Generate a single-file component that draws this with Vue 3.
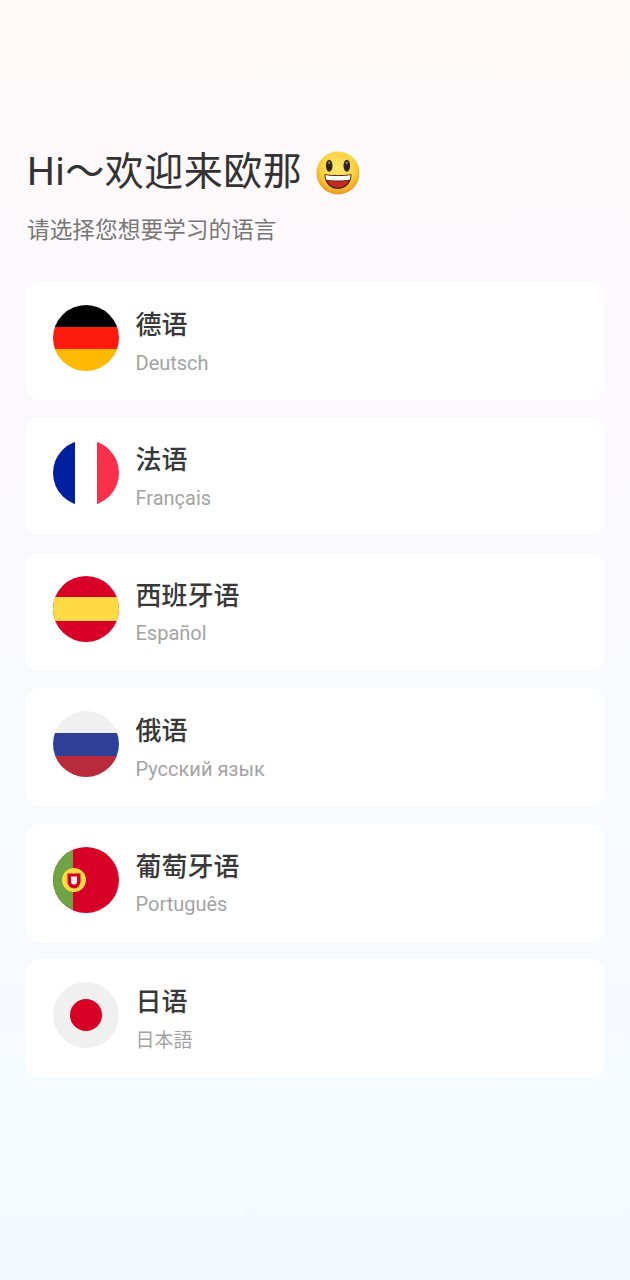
<script setup>
const langs = [
  { id: 'de', name: '德语', native: 'Deutsch' },
  { id: 'fr', name: '法语', native: 'Français' },
  { id: 'es', name: '西班牙语', native: 'Español' },
  { id: 'ru', name: '俄语', native: 'Русский язык' },
  { id: 'pt', name: '葡萄牙语', native: 'Português' },
  { id: 'ja', name: '日语', native: '日本語' },
]
</script>

<template>
  <div class="page">
    <div class="heading">
      <h1 class="title">
        <span>Hi～欢迎来欧那</span>
        <svg class="emoji" viewBox="0 0 44 44" width="44" height="44">
          <defs>
            <radialGradient id="face" cx="50%" cy="38%" r="62%">
              <stop offset="0" stop-color="#ffe870" />
              <stop offset="0.65" stop-color="#fcd03c" />
              <stop offset="1" stop-color="#ec961c" />
            </radialGradient>
          </defs>
          <circle cx="22" cy="22" r="21.5" fill="url(#face)" />
          <ellipse cx="13.2" cy="14.7" rx="3.3" ry="6" fill="#2e2320" />
          <ellipse cx="30.8" cy="14.7" rx="3.3" ry="6" fill="#2e2320" />
          <ellipse cx="13.2" cy="11.8" rx="1.2" ry="1.4" fill="#8a7a66" />
          <ellipse cx="30.8" cy="11.8" rx="1.2" ry="1.4" fill="#8a7a66" />
          <path d="M8.5 23C13 24.5 31 24.5 35.5 23C36 32 29 38 22 38C15 38 8 32 8.5 23Z" fill="#4a1f16" />
          <path d="M11 29.5C15 30.5 29 30.5 33 29.5C31 34 27 36.5 22 36.5C17 36.5 13 34 11 29.5Z" fill="#c5281f" />
          <path d="M9.5 24C14 25.3 30 25.3 34.5 24C34.5 26 34.2 27.4 33.6 28.8C29 29.8 15 29.8 10.4 28.8C9.8 27.4 9.5 26 9.5 24Z" fill="#fff" />
        </svg>
      </h1>
      <p class="subtitle">请选择您想要学习的语言</p>
    </div>

    <ul class="list">
      <li v-for="lang in langs" :key="lang.id" class="card">
        <svg class="flag" viewBox="0 0 66 66" width="66" height="66">
          <defs>
            <clipPath :id="`clip-${lang.id}`"><circle cx="33" cy="33" r="33" /></clipPath>
          </defs>
          <g :clip-path="`url(#clip-${lang.id})`">
            <template v-if="lang.id === 'de'">
              <rect width="66" height="22" fill="#000" />
              <rect y="22" width="66" height="22" fill="#ff1a0e" />
              <rect y="44" width="66" height="22" fill="#ffb900" />
            </template>
            <template v-else-if="lang.id === 'fr'">
              <rect width="22" height="66" fill="#00209f" />
              <rect x="22" width="22" height="66" fill="#fff" />
              <rect x="44" width="22" height="66" fill="#f8304c" />
            </template>
            <template v-else-if="lang.id === 'es'">
              <rect width="66" height="66" fill="#d80027" />
              <rect y="21" width="66" height="24" fill="#ffda44" />
            </template>
            <template v-else-if="lang.id === 'ru'">
              <rect width="66" height="22" fill="#f0f0f0" />
              <rect y="22" width="66" height="23" fill="#2f3e96" />
              <rect y="45" width="66" height="21" fill="#b92b3c" />
            </template>
            <template v-else-if="lang.id === 'pt'">
              <rect width="66" height="66" fill="#d80027" />
              <rect width="20" height="66" fill="#6da544" />
              <circle cx="21" cy="33" r="12" fill="#ffda44" />
              <path d="M14.5 26.5h13v8.5a6.5 6.5 0 0 1-13 0z" fill="#d80027" />
              <path d="M18 29.5h6v5a3 3 0 0 1-6 0z" fill="#f0f0f0" />
            </template>
            <template v-else>
              <rect width="66" height="66" fill="#f0f0f0" />
              <circle cx="33" cy="33" r="16" fill="#d80027" />
            </template>
          </g>
        </svg>
        <div class="text">
          <div class="name">{{ lang.name }}</div>
          <div class="native" :class="{ cjk: lang.id === 'ja' }">{{ lang.native }}</div>
        </div>
      </li>
    </ul>
  </div>
</template>

<style>
html, body { margin: 0; padding: 0; }
</style>

<style scoped>
.page {
  box-sizing: border-box;
  width: 630px;
  height: 1280px;
  padding: 148px 26px 0;
  background: linear-gradient(180deg, #fff9f9 0%, #fbf9fe 35%, #f9fafe 55%, #f4fbff 100%);
  font-family: Roboto, "Noto Sans CJK SC", sans-serif;
  overflow: hidden;
}
.heading { padding-left: 1px; }
.title {
  margin: 0;
  display: flex;
  align-items: center;
  gap: 14px;
  height: 48px;
  font-size: 39px;
  font-weight: 400;
  letter-spacing: 0.5px;
  color: #333;
  line-height: 48px;
}
.emoji { flex: none; position: relative; top: 1px; }
.subtitle {
  margin: 22px 0 0;
  font-size: 22.7px;
  line-height: 26px;
  color: #777;
}
.list {
  list-style: none;
  margin: 38px 0 0;
  padding: 0;
  display: flex;
  flex-direction: column;
  gap: 17.4px;
}
.card {
  box-sizing: border-box;
  height: 118px;
  background: #fff;
  border-radius: 14px;
  padding: 0 26px 0 26.5px;
  display: flex;
  align-items: center;
  gap: 17px;
}
.flag { flex: none; margin-bottom: 6px; }
.text { padding-top: 1.5px; }
.name {
  font-size: 26px;
  font-weight: 500;
  line-height: 32px;
  color: #383838;
}
.native {
  margin-top: 9.5px;
  font-size: 20px;
  line-height: 24px;
  color: #a3a3a3;
}
.native.cjk {
  font-family: "Noto Sans CJK JP", sans-serif;
  font-size: 19px;
}
</style>
